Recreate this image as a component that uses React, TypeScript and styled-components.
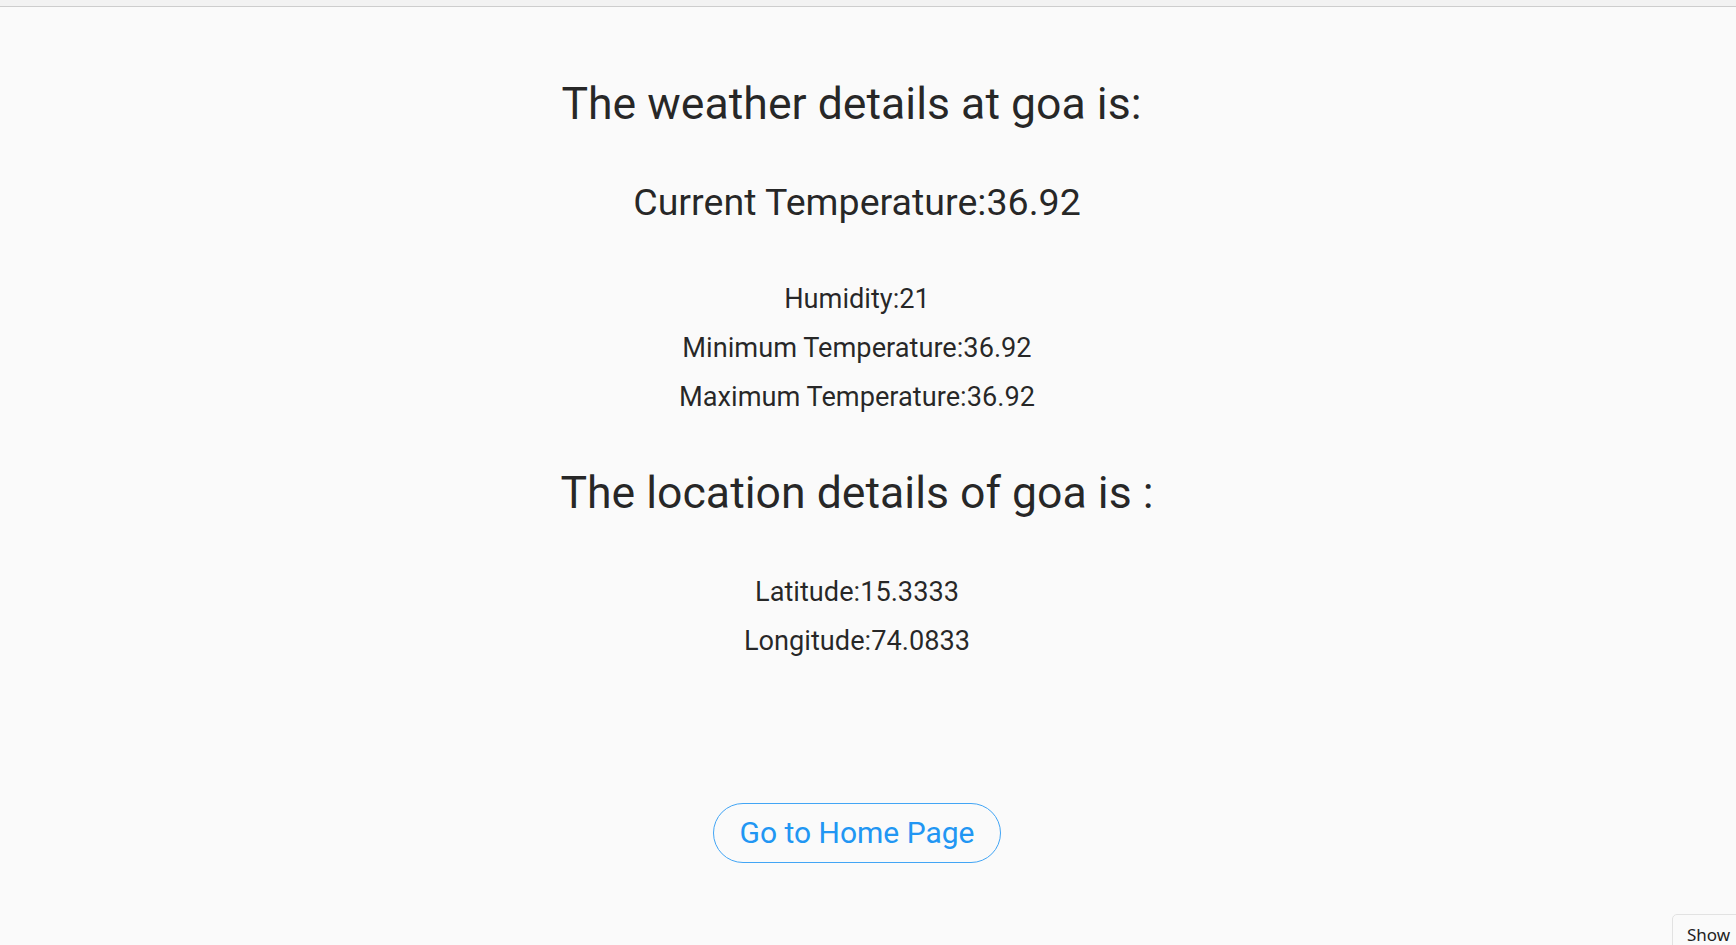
import React from "react";
import styled, { createGlobalStyle } from "styled-components";

const GlobalStyle = createGlobalStyle`
  html, body {
    margin: 0;
    padding: 0;
    background: #fafafa;
    font-family: Roboto, "Liberation Sans", Arial, sans-serif;
  }
  * { box-sizing: border-box; }
`;

const Page = styled.div`
  min-height: 945px;
  background: #fafafa;
`;

const TopBar = styled.div`
  height: 7px;
  background: #f2f2f2;
  border-bottom: 1px solid #cdcdcd;
`;

const Content = styled.main`
  display: flex;
  flex-direction: column;
  align-items: center;
  padding-right: 22px;
  color: rgba(0, 0, 0, 0.85);
`;

const Heading = styled.h1<{ $gap: number }>`
  margin: ${(p) => p.$gap}px 0 0;
  font-size: 44.6px;
  line-height: 54px;
  font-weight: 400;
  white-space: pre;
`;

const CurrentTemp = styled.h2`
  margin: 49.75px 0 0;
  font-size: 37.6px;
  line-height: 44px;
  font-weight: 400;
`;

const StatList = styled.div<{ $gap: number }>`
  display: flex;
  flex-direction: column;
  align-items: center;
  margin-top: ${(p) => p.$gap}px;
`;

const Stat = styled.p`
  margin: 0;
  font-size: 27.2px;
  line-height: 48.75px;
  font-weight: 400;
`;

const HomeButton = styled.button`
  margin-top: 137.5px;
  height: 60px;
  padding: 0 25px;
  display: inline-flex;
  align-items: center;
  justify-content: center;
  border: 1px solid #42a5f5;
  border-radius: 30px;
  background: transparent;
  color: #2196f3;
  font-family: Roboto, "Liberation Sans", Arial, sans-serif;
  font-size: 30px;
  font-weight: 400;
  line-height: 1;
  cursor: pointer;
`;

const ShowTab = styled.div`
  position: fixed;
  left: 1672px;
  top: 914px;
  width: 90px;
  height: 50px;
  padding: 10px 0 0 14px;
  border: 1px solid #e2e2e2;
  border-radius: 5px;
  background: #fafafa;
  color: #222;
  font-family: "Noto Sans", "Open Sans", sans-serif;
  font-size: 17px;
  line-height: 20px;
`;

export default function App() {
  return (
    <Page>
      <GlobalStyle />
      <TopBar />
      <Content>
        <Heading $gap={69.5}>{"The weather details at goa is: "}</Heading>
        <CurrentTemp>Current Temperature:36.92</CurrentTemp>
        <StatList $gap={51}>
          <Stat>Humidity:21</Stat>
          <Stat>Minimum Temperature:36.92</Stat>
          <Stat>Maximum Temperature:36.92</Stat>
        </StatList>
        <Heading $gap={44}>The location details of goa is :</Heading>
        <StatList $gap={48.5}>
          <Stat>Latitude:15.3333</Stat>
          <Stat>Longitude:74.0833</Stat>
        </StatList>
        <HomeButton type="button">Go to Home Page</HomeButton>
      </Content>
      <ShowTab>Show</ShowTab>
    </Page>
  );
}
